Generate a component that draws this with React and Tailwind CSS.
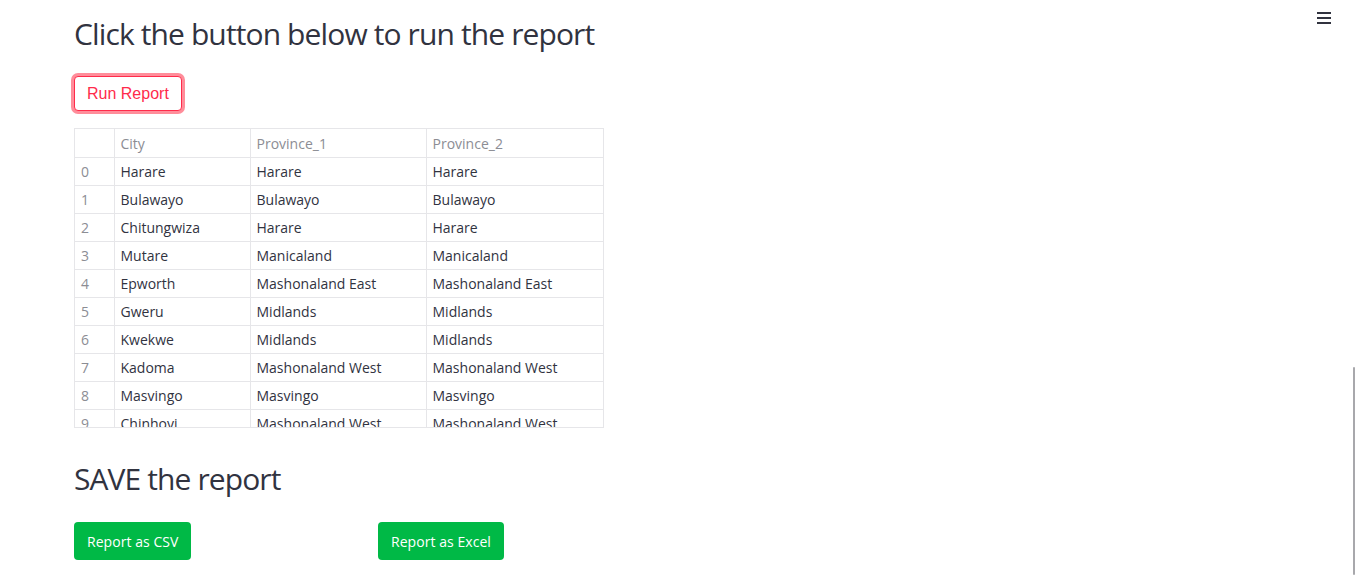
import React from "react";

const rows = [
  ["Harare", "Harare", "Harare"],
  ["Bulawayo", "Bulawayo", "Bulawayo"],
  ["Chitungwiza", "Harare", "Harare"],
  ["Mutare", "Manicaland", "Manicaland"],
  ["Epworth", "Mashonaland East", "Mashonaland East"],
  ["Gweru", "Midlands", "Midlands"],
  ["Kwekwe", "Midlands", "Midlands"],
  ["Kadoma", "Mashonaland West", "Mashonaland West"],
  ["Masvingo", "Masvingo", "Masvingo"],
  ["Chinhoyi", "Mashonaland West", "Mashonaland West"],
];

export default function App() {
  return (
    <div
      className="relative w-[1356px] h-[582px] overflow-hidden bg-white text-[#31333f]"
      style={{ fontFamily: "'Open Sans', 'Noto Sans', sans-serif" }}
    >
      <button className="absolute left-[1317px] top-[12px] flex flex-col gap-[3px]">
        <span className="block w-[14px] h-[2px] bg-[#31333f]" />
        <span className="block w-[14px] h-[2px] bg-[#31333f]" />
        <span className="block w-[14px] h-[2px] bg-[#31333f]" />
      </button>
      <div className="absolute right-[1px] top-[367px] w-[2px] h-[208px] bg-[#a8a8ac] rounded" />

      <div className="pl-[74px] pt-[14px] flex flex-col">
        <h2 className="text-[30px] leading-[40px] font-normal tracking-[-0.88px]">
          Click the button below to run the report
        </h2>
        <div className="mt-[22px]">
          <button
            className="h-[35px] px-[12px] rounded-[4px] bg-white border border-[#ff2b4b] text-[#ff2b4b] text-[16px] ring-[3px] ring-[#ff8d9a]"
            style={{ fontFamily: "'Liberation Sans', Arial, sans-serif" }}
          >
            Run Report
          </button>
        </div>
        <div className="mt-[17px] w-[530px] h-[300px] overflow-hidden border border-[#e6e6e9]">
          <table className="border-collapse text-[14px] table-fixed w-[531px]">
            <colgroup>
              <col className="w-[39px]" />
              <col className="w-[136px]" />
              <col className="w-[176px]" />
              <col className="w-[180px]" />
            </colgroup>
            <thead>
              <tr className="h-[28px] text-[#8c8d94]">
                <th className="border-b border-r border-[#e6e6e9] font-normal text-left pl-[6px]"></th>
                <th className="border-b border-r border-[#e6e6e9] font-normal text-left pl-[6px] pt-[2px]">City</th>
                <th className="border-b border-r border-[#e6e6e9] font-normal text-left pl-[6px] pt-[2px]">Province_1</th>
                <th className="border-b border-[#e6e6e9] font-normal text-left pl-[6px] pt-[2px]">Province_2</th>
              </tr>
            </thead>
            <tbody>
              {rows.map((r, i) => (
                <tr key={i} className="h-[28px]">
                  <td className="border-b border-r border-[#e6e6e9] pl-[6px] text-[#8c8d94]">{i}</td>
                  <td className="border-b border-r border-[#e6e6e9] pl-[6px] whitespace-nowrap">{r[0]}</td>
                  <td className="border-b border-r border-[#e6e6e9] pl-[6px] whitespace-nowrap">{r[1]}</td>
                  <td className="border-b border-[#e6e6e9] pl-[6px] whitespace-nowrap">{r[2]}</td>
                </tr>
              ))}
            </tbody>
          </table>
        </div>
        <h2 className="mt-[31px] text-[30px] leading-[40px] font-normal tracking-[-0.9px]">
          SAVE the report
        </h2>
        <div className="mt-[23px] flex">
          <div className="w-[304px]">
            <button className="h-[38px] px-[13px] rounded-[4px] bg-[#00b946] text-white text-[14px] tracking-[0.05px]">
              Report as CSV
            </button>
          </div>
          <div>
            <button className="h-[38px] px-[13px] rounded-[4px] bg-[#00b946] text-white text-[14px] tracking-[0.05px]">
              Report as Excel
            </button>
          </div>
        </div>
      </div>
    </div>
  );
}
